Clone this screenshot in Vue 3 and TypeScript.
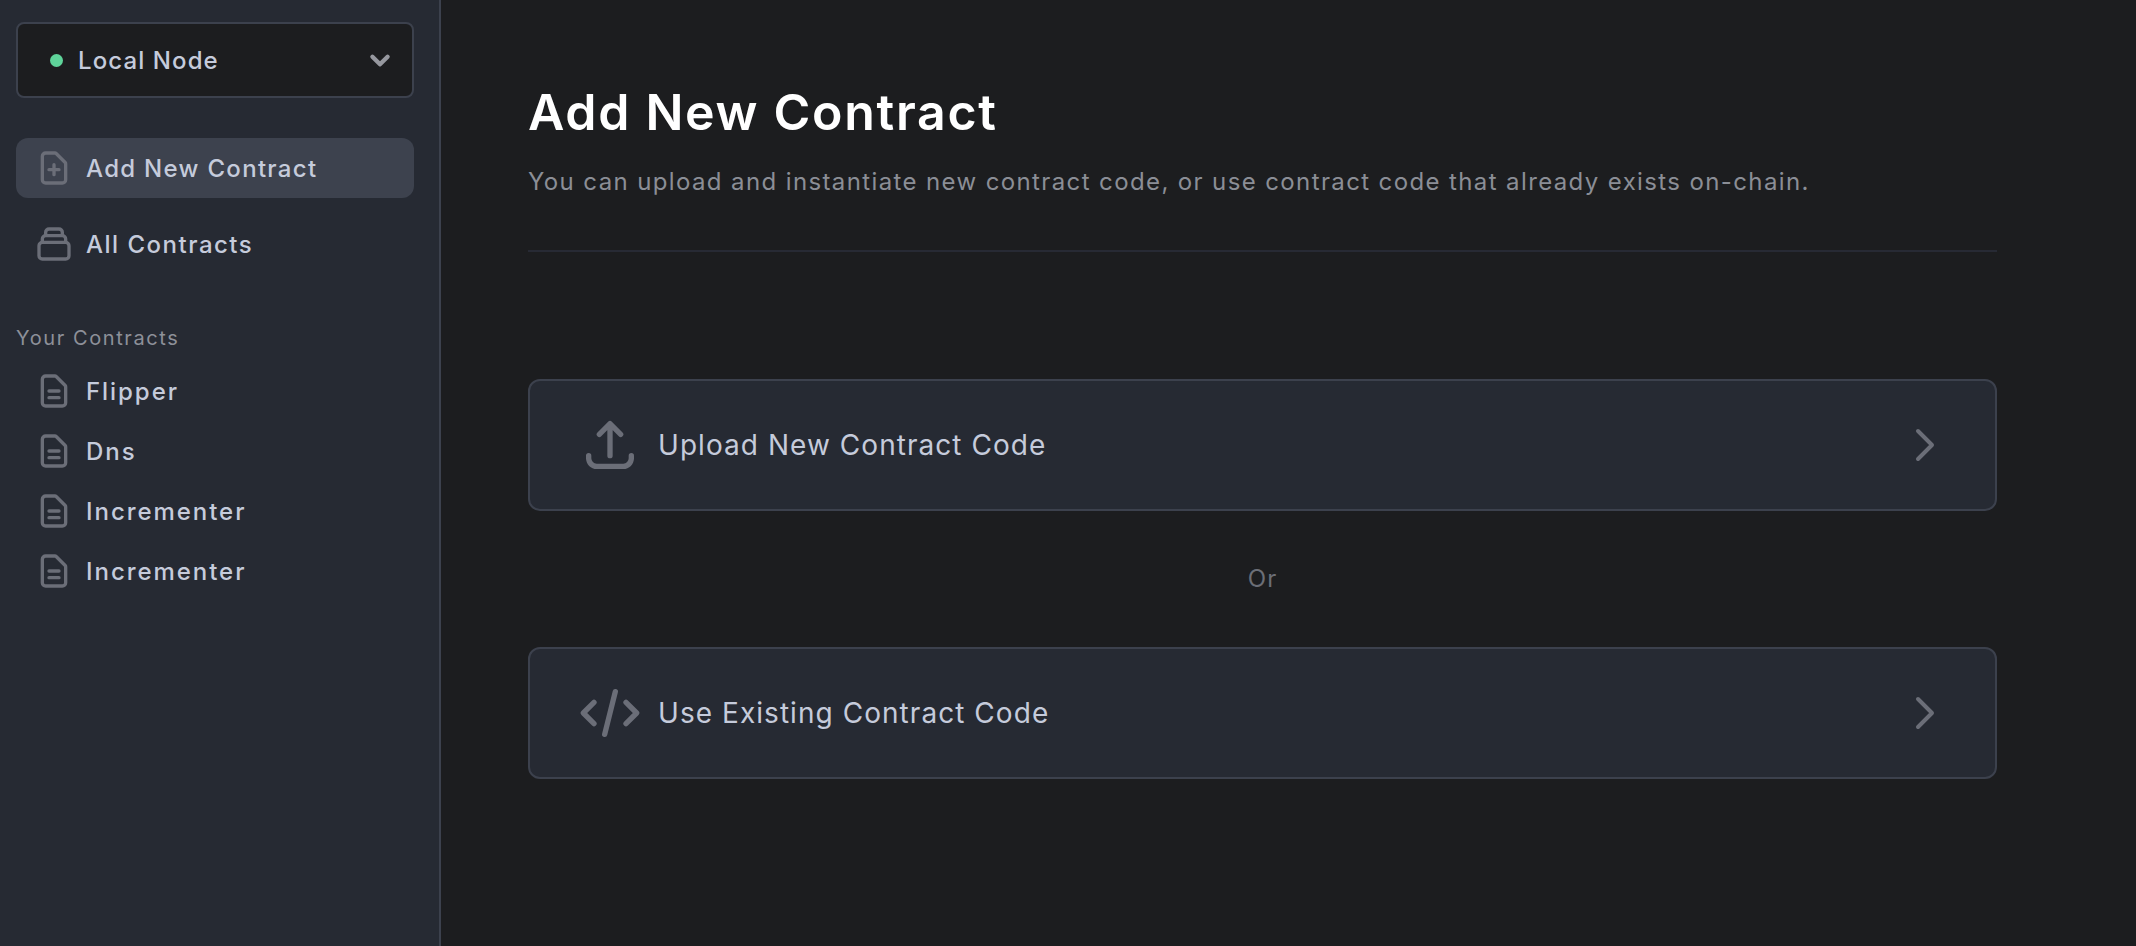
<script setup lang="ts">
const contracts: string[] = ['Flipper', 'Dns', 'Incrementer', 'Incrementer']
const docPath = 'M9 12h6m-6 4h6m2 5H7a2 2 0 01-2-2V5a2 2 0 012-2h5.586a1 1 0 01.707.293l5.414 5.414a1 1 0 01.293.707V19a2 2 0 01-2 2z'
const options = [
  { label: 'Upload New Contract Code', path: 'M4 16v1a3 3 0 003 3h10a3 3 0 003-3v-1m-4-8l-4-4m0 0L8 8m4-4v12' },
  { label: 'Use Existing Contract Code', path: 'M10 20l4-16m4 4l4 4-4 4M6 16l-4-4 4-4' },
]
</script>

<template>
  <div class="app">
    <aside class="sidebar">
      <div class="node-select">
        <span class="dot"></span>
        <span class="node-label">Local Node</span>
        <svg class="chev-down" viewBox="0 0 24 24" fill="none" stroke="currentColor" stroke-width="4" stroke-linecap="round" stroke-linejoin="round"><path d="M19 9l-7 7-7-7" /></svg>
      </div>
      <nav class="nav">
        <a class="item active">
          <svg class="icon" viewBox="0 0 24 24" fill="none" stroke="currentColor" stroke-width="2" stroke-linecap="round" stroke-linejoin="round"><path d="M9 13h6m-3-3v6m5 5H7a2 2 0 01-2-2V5a2 2 0 012-2h5.586a1 1 0 01.707.293l5.414 5.414a1 1 0 01.293.707V19a2 2 0 01-2 2z" /></svg>
          <span>Add New Contract</span>
        </a>
        <a class="item all">
          <svg class="icon" viewBox="0 0 24 24" fill="none" stroke="currentColor" stroke-width="2" stroke-linecap="round" stroke-linejoin="round"><path d="M19 11H5m14 0a2 2 0 012 2v6a2 2 0 01-2 2H5a2 2 0 01-2-2v-6a2 2 0 012-2m14 0V9a2 2 0 00-2-2M5 11V9a2 2 0 012-2m0 0V5a2 2 0 012-2h6a2 2 0 012 2v2M7 7h10" /></svg>
          <span>All Contracts</span>
        </a>
      </nav>
      <div class="section-title">Your Contracts</div>
      <div class="list">
        <a v-for="(name, i) in contracts" :key="i" class="item">
          <svg class="icon" viewBox="0 0 24 24" fill="none" stroke="currentColor" stroke-width="2" stroke-linecap="round" stroke-linejoin="round"><path :d="docPath" /></svg>
          <span>{{ name }}</span>
        </a>
      </div>
    </aside>
    <main class="main">
      <header class="head">
        <h1>Add New Contract</h1>
        <p>You can upload and instantiate new contract code, or use contract code that already exists on-chain.</p>
      </header>
      <section class="choices">
        <template v-for="(opt, i) in options" :key="opt.label">
          <div v-if="i > 0" class="or">Or</div>
          <a class="card">
            <span class="card-icon">
              <svg viewBox="0 0 24 24" fill="none" stroke="currentColor" stroke-width="2" stroke-linecap="round" stroke-linejoin="round"><path :d="opt.path" /></svg>
            </span>
            <span class="card-label">{{ opt.label }}</span>
            <svg class="chev-right" viewBox="0 0 24 24" fill="none" stroke="currentColor" stroke-width="2" stroke-linecap="round" stroke-linejoin="round"><path d="M9 5l7 7-7 7" /></svg>
          </a>
        </template>
      </section>
    </main>
  </div>
</template>

<style>
html, body { margin: 0; background: #1c1d1f; }
</style>

<style scoped>
.app {
  display: grid;
  grid-template-columns: 441px 1fr;
  height: 946px;
  overflow: hidden;
  background: #1c1d1f;
  font-family: Inter, "Liberation Sans", sans-serif;
  color: #c5cbdb;
}
.sidebar {
  box-sizing: border-box;
  background: #262a33;
  border-right: 2px solid #3c414d;
  padding: 22px 25px 0 16px;
}
.node-select {
  box-sizing: border-box;
  height: 76px;
  display: flex;
  align-items: center;
  background: #1c1d1f;
  border: 2px solid #3c414d;
  border-radius: 8px;
  padding: 0 19px 0 32px;
}
.dot { width: 13px; height: 13px; border-radius: 50%; background: #5fd49a; }
.node-label { margin-left: 15px; font-size: 24px; font-weight: 500; letter-spacing: 1.1px; flex: 1; }
.chev-down { width: 26px; height: 26px; color: #96989f; }
.nav { margin-top: 40px; display: flex; flex-direction: column; gap: 16px; }
.item {
  height: 60px;
  display: flex;
  align-items: center;
  gap: 12px;
  padding-left: 18px;
  border-radius: 12px;
  font-size: 24px;
  font-weight: 500;
  letter-spacing: 1.3px;
}
.icon { width: 40px; height: 40px; color: #6b6e78; flex: none; }
.item.active { background: #3d424e; }
.item.all { letter-spacing: 1.5px; }
.list .item { letter-spacing: 1.95px; }
.section-title {
  margin-top: 50px;
  height: 28px;
  line-height: 28px;
  font-size: 20px;
  letter-spacing: 1.6px;
  color: #8d9099;
}
.list { margin-top: 9px; }
.main { padding: 0 139px 0 87px; }
.head {
  height: 252px;
  box-sizing: border-box;
  padding-top: 81px;
  border-bottom: 2px solid #272a34;
}
h1 {
  margin: 0;
  font-size: 50px;
  line-height: 62px;
  font-weight: 600;
  letter-spacing: 1.7px;
  color: #fff;
}
p {
  margin: 23px 0 0;
  font-size: 24px;
  line-height: 32px;
  letter-spacing: 1.38px;
  color: #8b8e96;
}
.choices { margin-top: 127px; }
.card {
  box-sizing: border-box;
  height: 132px;
  display: flex;
  align-items: center;
  background: #262a33;
  border: 2px solid #3c414d;
  border-radius: 12px;
  padding: 0 47px 0 48px;
}
.card-icon { width: 64px; height: 64px; flex: none; color: #6b6e78; }
.card-icon svg { width: 64px; height: 64px; display: block; }
.card-label { margin-left: 16px; flex: 1; font-size: 28px; letter-spacing: 1.05px; }
.chev-right { width: 48px; height: 48px; color: #6b6e78; flex: none; }
.or {
  height: 136px;
  line-height: 136px;
  text-align: center;
  font-size: 24px;
  letter-spacing: 1px;
  color: #6b6e76;
}
</style>
